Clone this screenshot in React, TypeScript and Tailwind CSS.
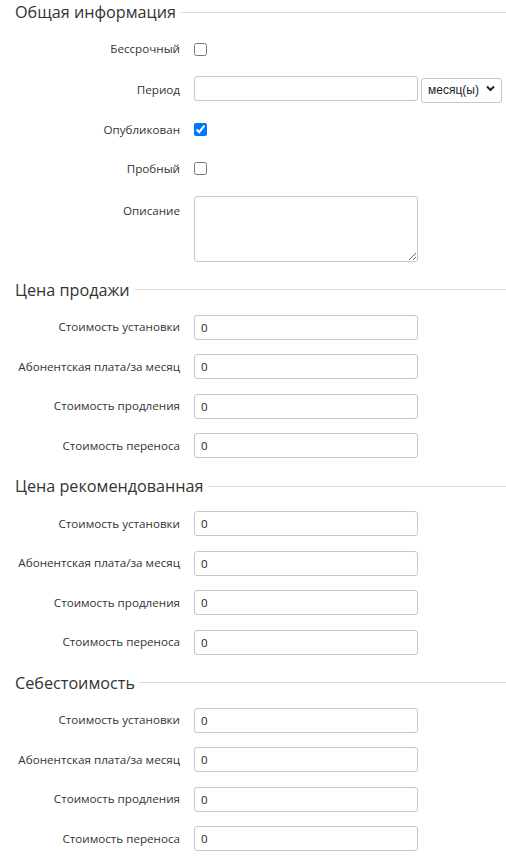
import { useState } from "react";

type Field = { label: string; value: string };

const priceFields: Field[] = [
  { label: "Стоимость установки", value: "0" },
  { label: "Абонентская плата/за месяц", value: "0" },
  { label: "Стоимость продления", value: "0" },
  { label: "Стоимость переноса", value: "0" },
];

const sections = ["Цена продажи", "Цена рекомендованная", "Себестоимость"];

function Legend({ title }: { title: string }) {
  return (
    <div className="flex h-[24px] items-center pl-[15px]">
      <span className="text-[16.2px] leading-[24px] text-[#333]">{title}</span>
      <div className="ml-[4px] h-px flex-1 bg-[#dcdcdc]" />
    </div>
  );
}

function Row({ label, children, top }: { label: string; children: React.ReactNode; top?: boolean }) {
  return (
    <div className={`flex gap-[14px] ${top ? "items-start" : "items-center min-h-[24px]"}`}>
      <label className={`w-[180px] shrink-0 text-right text-[11.65px] text-[#333] ${top ? "pt-[6px]" : ""}`}>
        {label}
      </label>
      {children}
    </div>
  );
}

const inputCls =
  "h-[25px] w-[224px] rounded-[3px] border border-[#c8c8c8] bg-white px-[6px] text-[11.5px] text-[#222] outline-none";

export default function App() {
  const [flags, setFlags] = useState({ perpetual: false, published: true, trial: false });

  return (
    <div className="w-[506px] bg-white pb-[7px] font-['Open_Sans',sans-serif]">
      <Legend title="Общая информация" />
      <div className="mt-[13px] flex flex-col gap-[15px]">
        <Row label="Бессрочный">
          <input
            type="checkbox"
            className="m-0 h-[13px] w-[13px]"
            checked={flags.perpetual}
            onChange={() => setFlags({ ...flags, perpetual: !flags.perpetual })}
          />
        </Row>
        <Row label="Период">
          <div className="flex gap-[3px]">
            <input className={inputCls} defaultValue="" />
            <div className="relative">
              <select className="h-[25px] w-[81px] appearance-none rounded-[3px] border border-[#c8c8c8] bg-white pl-[6px] font-['Liberation_Sans',sans-serif] text-[12px] text-[#222] outline-none">
                <option>месяц(ы)</option>
                <option>год(ы)</option>
              </select>
              <svg
                className="pointer-events-none absolute right-[7px] top-[9px]"
                width="9"
                height="7"
                viewBox="0 0 9 7"
              >
                <path d="M1 1.5 L4.5 5 L8 1.5" fill="none" stroke="#222" strokeWidth="2" />
              </svg>
            </div>
          </div>
        </Row>
        <Row label="Опубликован">
          <input
            type="checkbox"
            className="m-0 h-[13px] w-[13px]"
            checked={flags.published}
            onChange={() => setFlags({ ...flags, published: !flags.published })}
          />
        </Row>
        <Row label="Пробный">
          <input
            type="checkbox"
            className="m-0 h-[13px] w-[13px]"
            checked={flags.trial}
            onChange={() => setFlags({ ...flags, trial: !flags.trial })}
          />
        </Row>
        <Row label="Описание" top>
          <textarea className="h-[66px] w-[224px] rounded-[3px] border border-[#c8c8c8] bg-white px-[6px] py-[3px] text-[11.5px] outline-none" />
        </Row>
      </div>

      {sections.map((title) => (
        <div key={title} className="mt-[16px]">
          <Legend title={title} />
          <div className="mt-[13px] flex flex-col gap-[14.5px]">
            {priceFields.map((f) => (
              <Row key={f.label} label={f.label}>
                <input className={inputCls} defaultValue={f.value} />
              </Row>
            ))}
          </div>
        </div>
      ))}
    </div>
  );
}
